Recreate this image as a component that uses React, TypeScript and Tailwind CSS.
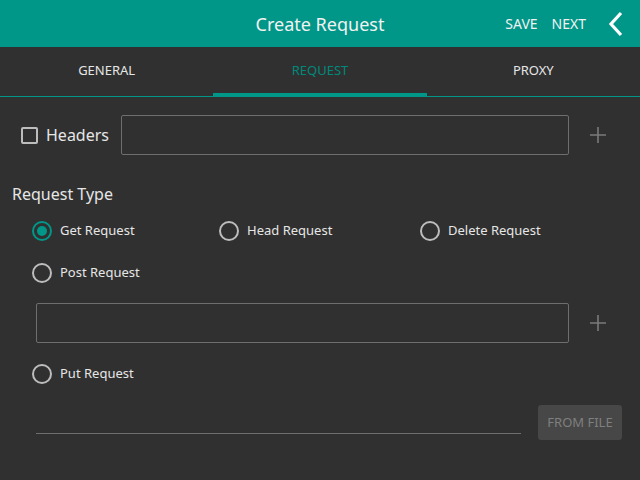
import React, { useState } from 'react';

const font = { fontFamily: '"Noto Sans", "Open Sans", sans-serif' };

function Radio({ label, checked, onClick }: { label: string; checked?: boolean; onClick?: () => void }) {
  return (
    <button onClick={onClick} className="flex items-center gap-[8px] text-left">
      <span
        className={
          'flex h-[20px] w-[20px] items-center justify-center rounded-full border-2 ' +
          (checked ? 'border-[#009688]' : 'border-[#bdbdbd]')
        }
      >
        {checked && <span className="h-[10px] w-[10px] rounded-full bg-[#009688]" />}
      </span>
      <span className="text-[13px] text-[#e6e6e6]">{label}</span>
    </button>
  );
}

function Plus() {
  return (
    <div className="flex w-[71px] pl-[20px]">
      <svg width="18" height="18" viewBox="0 0 18 18">
        <path d="M9 1v16M1 9h16" stroke="#7a7a7a" strokeWidth="1.6" />
      </svg>
    </div>
  );
}

export default function App() {
  const [tab, setTab] = useState(1);
  const [type, setType] = useState('Get Request');
  const tabs = ['GENERAL', 'REQUEST', 'PROXY'];

  return (
    <div className="flex h-[480px] w-[640px] flex-col bg-[#303030]" style={font}>
      <header className="flex h-[47px] items-center bg-[#009688] text-white">
        <div className="w-[190px]" />
        <h1 className="flex-1 pt-[1px] text-center text-[18px] text-[#f2f2f2]">Create Request</h1>
        <div className="flex w-[190px] items-center justify-end">
          <button className="text-[14px] text-[#f2f2f2]">SAVE</button>
          <button className="ml-[14px] text-[14px] text-[#f2f2f2]">NEXT</button>
          <button className="ml-[22px] mr-[16px]">
            <svg width="16" height="26" viewBox="0 0 16 26">
              <path d="M13 2 3 13l10 11" fill="none" stroke="white" strokeWidth="3.2" />
            </svg>
          </button>
        </div>
      </header>

      <nav className="flex h-[50px] border-b border-[#009688]">
        {tabs.map((t, i) => (
          <button
            key={t}
            onClick={() => setTab(i)}
            className={
              'flex flex-1 items-center justify-center border-b-[3px] pt-[2px] text-[13px] ' +
              (tab === i ? 'border-[#009688] text-[#00897b]' : 'border-transparent text-[#e6e6e6]')
            }
          >
            {t}
          </button>
        ))}
      </nav>

      <div className="mt-[18px] flex items-center">
        <div className="flex w-[121px] items-center">
          <span className="ml-[21px] h-[17px] w-[17px] rounded-[2px] border-2 border-[#bdbdbd]" />
          <span className="ml-[8px] text-[16px] text-[#e6e6e6]">Headers</span>
        </div>
        <input className="h-[40px] flex-1 rounded-[2px] border border-[#6e6e6e] bg-transparent px-2 text-white outline-none" />
        <Plus />
      </div>

      <div className="ml-[12px] mt-[27px] text-[16px] text-[#e6e6e6]">Request Type</div>

      <div className="mt-[15px] grid grid-cols-[187px_201px_1fr] pl-[32px]">
        {['Get Request', 'Head Request', 'Delete Request'].map((r) => (
          <Radio key={r} label={r} checked={type === r} onClick={() => setType(r)} />
        ))}
      </div>

      <div className="mt-[22px] pl-[32px]">
        <Radio label="Post Request" checked={type === 'Post Request'} onClick={() => setType('Post Request')} />
      </div>

      <div className="mt-[20px] flex items-center">
        <input className="ml-[36px] h-[40px] flex-1 rounded-[2px] border border-[#6e6e6e] bg-transparent px-2 text-white outline-none" />
        <Plus />
      </div>

      <div className="mt-[21px] pl-[32px]">
        <Radio label="Put Request" checked={type === 'Put Request'} onClick={() => setType('Put Request')} />
      </div>

      <div className="mt-[20px] flex items-end">
        <input className="mb-[6px] ml-[36px] h-[30px] w-[485px] border-b border-[#6e6e6e] bg-transparent text-white outline-none" />
        <button className="ml-[17px] flex h-[35px] w-[84px] items-center justify-center rounded-[3px] bg-[#474747] text-[13px] text-[#7f7f7f]">
          FROM FILE
        </button>
      </div>
    </div>
  );
}
